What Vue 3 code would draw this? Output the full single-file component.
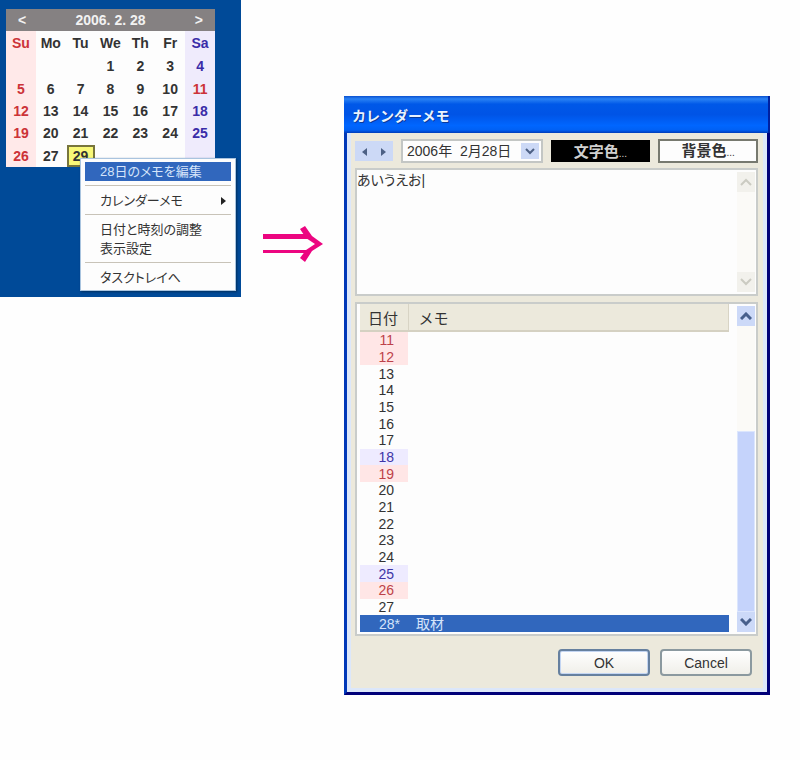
<template>
  <main class="scene">
    <section class="desktop">
      <div class="calendar">
        <div class="cal-head">
          <button type="button" aria-label="Previous month">&lt;</button>
          <span>2006. 2. 28</span>
          <button type="button" aria-label="Next month">&gt;</button>
        </div>
        <table class="cal-grid">
          <thead>
            <tr>
              <th v-for="(d, i) in weekdays" :key="d" :class="colClass(i)">{{ d }}</th>
            </tr>
          </thead>
          <tbody>
            <tr v-for="(week, w) in weeks" :key="w">
              <td v-for="(day, i) in week" :key="i" :class="[colClass(i), { holiday: day === 11 }]">
                <span :class="{ today: day === 29 }">{{ day }}</span>
              </td>
            </tr>
          </tbody>
        </table>
      </div>

      <div class="menu">
        <button type="button" class="active">28日のメモを編集</button>
        <hr />
        <button type="button" class="sub">
          カレンダーメモ
          <svg width="5" height="8" viewBox="0 0 5 8"><path d="M0 0L5 4L0 8Z" fill="#222" /></svg>
        </button>
        <hr />
        <button type="button">日付と時刻の調整</button>
        <button type="button">表示設定</button>
        <hr />
        <button type="button">タスクトレイへ</button>
      </div>
    </section>

    <div class="arrow">
      <svg width="62" height="38" viewBox="0 0 62 38">
        <path d="M1 9H47L52 14H1Z" fill="#ec0580" />
        <path d="M1 25H50L47 28H1Z" fill="#ec0580" />
        <path d="M38 4L43 1L50 11L61 19L50 26L43 37L38 33L44 25L53 19L44 13Z" fill="#ec0580" />
      </svg>
    </div>

    <form class="dialog" @submit.prevent>
      <h1>カレンダーメモ</h1>
      <div class="body">
        <div class="toolbar">
          <div class="nav">
            <button type="button" aria-label="Previous day">
              <svg width="5" height="8" viewBox="0 0 5 8"><path d="M5 0L0 4L5 8Z" fill="#4d6185" /></svg>
            </button>
            <button type="button" aria-label="Next day">
              <svg width="5" height="8" viewBox="0 0 5 8"><path d="M0 0L5 4L0 8Z" fill="#4d6185" /></svg>
            </button>
          </div>
          <div class="date">
            <select aria-label="日付">
              <option>2006年&nbsp; 2月28日</option>
            </select>
            <span class="drop">
              <svg width="10" height="7" viewBox="0 0 10 7"><path d="M1 1L5 5L9 1" fill="none" stroke="#4d6185" stroke-width="2" /></svg>
            </span>
          </div>
          <button type="button" class="color dark">文字色<small>...</small></button>
          <button type="button" class="color">背景色<small>...</small></button>
        </div>

        <div class="frame memo">
          <textarea v-model="memo" aria-label="メモ" spellcheck="false"></textarea>
          <div class="scroll off">
            <button type="button" aria-label="Scroll up"><svg width="12" height="8" viewBox="0 0 12 8"><path d="M1 7L6 2L11 7" /></svg></button>
            <button type="button" aria-label="Scroll down"><svg width="12" height="8" viewBox="0 0 12 8"><path d="M1 1L6 6L11 1" /></svg></button>
          </div>
        </div>

        <div class="frame list">
          <table>
            <thead>
              <tr><th class="day">日付</th><th>メモ</th></tr>
            </thead>
            <tbody>
              <tr v-for="n in days" :key="n" :class="{ selected: n === 28 }">
                <td class="day" :class="dayClass(n)">{{ n }}{{ n === 28 ? '*' : '' }}</td>
                <td>{{ n === 28 ? '取材' : '' }}</td>
              </tr>
            </tbody>
          </table>
          <div class="scroll">
            <button type="button" aria-label="Scroll up"><svg width="12" height="8" viewBox="0 0 12 8"><path d="M1 7L6 2L11 7" /></svg></button>
            <div class="thumb"></div>
            <button type="button" aria-label="Scroll down"><svg width="12" height="8" viewBox="0 0 12 8"><path d="M1 1L6 6L11 1" /></svg></button>
          </div>
        </div>

        <div class="actions">
          <button type="submit" class="ok">OK</button>
          <button type="button">Cancel</button>
        </div>
      </div>
    </form>
  </main>
</template>

<script setup>
import { ref } from "vue"

const memo = ref("あいうえお|")
const weekdays = ["Su", "Mo", "Tu", "We", "Th", "Fr", "Sa"]
const weeks = [
  ["", "", "", 1, 2, 3, 4],
  [5, 6, 7, 8, 9, 10, 11],
  [12, 13, 14, 15, 16, 17, 18],
  [19, 20, 21, 22, 23, 24, 25],
  [26, 27, 29, "", "", "", ""]
]
const days = Array.from({ length: 18 }, (_, i) => i + 11)

function colClass(i) {
  if (i === 0) return "sun"
  if (i === 6) return "sat"
  return ""
}

function dayClass(n) {
  if ([11, 12, 19, 26].includes(n)) return "red"
  if ([18, 25].includes(n)) return "blue"
  return ""
}
</script>

<style>
body {
  margin: 0;
  background: #fefefe;
}
</style>

<style scoped>
.scene {
  display: grid;
  grid-template-columns: 241fr 103fr 426fr 30fr;
  align-items: start;
  font-family: "Liberation Sans", "Noto Sans CJK JP", sans-serif;
  font-size: 14px;
  color: #333;
}

* {
  box-sizing: border-box;
}

button, select, textarea {
  font: inherit;
  color: inherit;
  margin: 0;
  padding: 0;
  border: 0;
  background: none;
}

.desktop {
  position: relative;
  padding: 9px 26px 0 6px;
  height: 297px;
  background: #004a98;
}

.calendar {
  background: #fdfdfd;
  font-weight: bold;
}

.cal-head {
  display: flex;
  justify-content: space-between;
  align-items: center;
  height: 22px;
  padding: 0 12px;
  background: #858182;
  color: #f2f2f2;
}

.cal-grid {
  width: 100%;
  height: 136px;
  table-layout: fixed;
  border-collapse: collapse;
  text-align: center;
}

.cal-grid th, .cal-grid td {
  padding: 0;
  line-height: 22px;
}

.cal-grid th {
  height: 24px;
}

.cal-grid span {
  display: block;
  margin: 0 1px;
  min-height: 22px;
}

.cal-grid .sun {
  background: #ffe9e9;
  color: #cc3338;
}

.cal-grid .sat {
  background: #efebfc;
  color: #3a2ca8;
}

.cal-grid .holiday {
  color: #cc3338;
}

.cal-grid .today {
  box-shadow: inset 0 0 0 2px #77753c;
  background: #f8f878;
}

.menu {
  position: absolute;
  left: 80px;
  top: 158px;
  width: 156px;
  padding: 3px 4px;
  border: 1px solid #a9c4df;
  background: #fdfdfd;
  box-shadow: 1px 1px 2px #00305f;
  font-size: 13px;
  font-feature-settings: "palt";
}

.menu button {
  display: flex;
  align-items: center;
  justify-content: space-between;
  width: 100%;
  height: 19px;
  padding: 0 5px 0 15px;
  line-height: 19px;
  white-space: nowrap;
}

.menu .active {
  background: #3167bd;
  color: #d5e4fa;
}

.menu hr {
  height: 1px;
  margin: 4px 0 5px;
  border: 0;
  background: #c8c3b8;
}

.arrow {
  display: flex;
  justify-content: center;
  padding: 225px 0 0;
}

.dialog {
  margin-top: 96px;
  border: solid #0038b8;
  border-width: 0 3px 3px;
  border-right-color: #000078;
  border-bottom-color: #000078;
  background: #ece9dc;
}

h1 {
  margin: 0 -3px;
  padding: 2px 8px 0;
  height: 37px;
  line-height: 37px;
  font-size: 14px;
  color: #e8f2ff;
  text-shadow: 1px 1px #0a3a9a;
  border-right: 2px solid #0020a0;
  background: linear-gradient(#0a50d0, #2a82f4 8%, #0058e8 22%, #0054e6 50%, #0066ff 80%, #0060f4 92%, #003cb8);
}

.body {
  padding: 6px 5px 12px 4px;
  border: 4px solid #dce7fa;
  border-top: 0;
}

.toolbar {
  display: flex;
  align-items: center;
  gap: 8px;
  height: 24px;
}

.nav {
  display: flex;
  width: 38px;
  height: 20px;
  background: #ccd9f6;
}

.nav button {
  flex: 1;
}

.date {
  position: relative;
  flex: 142;
  height: 24px;
}

.date select {
  appearance: none;
  width: 100%;
  height: 100%;
  padding: 0 24px 0 4px;
  border: 2px solid #c3c6c4;
  border-radius: 0;
  background: #fdfdfd;
}

.drop {
  position: absolute;
  right: 4px;
  top: 4px;
  display: flex;
  align-items: center;
  justify-content: center;
  width: 18px;
  height: 16px;
  background: #ccd9f6;
  pointer-events: none;
}

.color {
  flex: 96;
  height: 24px;
  border: 2px solid #77796f;
  background: #fdfdfd;
  font-size: 15px;
  font-weight: bold;
  line-height: 20px;
}

.color small {
  font-size: 10px;
  font-weight: normal;
}

.dark {
  height: 22px;
  border-color: #000;
  background: #000;
  color: #d0d0d0;
}

.frame {
  display: flex;
  border: 2px solid #c9ccca;
  background: #fdfdfd;
}

.memo {
  height: 128px;
  margin-top: 5px;
}

textarea {
  flex: 1;
  min-width: 0;
  resize: none;
  outline: 0;
  overflow: hidden;
  line-height: 20px;
  font-feature-settings: "palt";
}

.scroll {
  display: flex;
  flex-direction: column;
  justify-content: space-between;
  width: 18px;
  margin: 2px 1px;
  background: #fbfaf7;
}

.scroll button {
  display: flex;
  align-items: center;
  justify-content: center;
  height: 20px;
  background: #ccd9f8;
}

.scroll path {
  fill: none;
  stroke: #48608c;
  stroke-width: 3;
}

.off button {
  background: #f2f1ec;
}

.off path {
  stroke: #cbcbc2;
  stroke-width: 2;
}

.thumb {
  flex: 0 0 181px;
  margin-top: auto;
  border: 1px solid #dce6fd;
  background: #c5d3fb;
}

.list {
  height: 334px;
  margin-top: 6px;
}

.list table {
  flex: 1;
  height: 328px;
  margin: 0 7px 0 3px;
  border-collapse: collapse;
  text-align: left;
}

.list th {
  height: 27px;
  padding: 0 0 0 10px;
  border-bottom: 2px solid #d5d1c2;
  border-right: 1px solid #d8d4c5;
  background: #ece9dc;
  font-size: 15px;
  font-weight: normal;
}

.list td {
  padding: 0 0 0 8px;
  line-height: 16px;
}

.list .day {
  width: 48px;
  padding: 0 0 0 8px;
}

.list td.day {
  padding: 0 14px 0 0;
  text-align: right;
}

.list .red {
  background: #ffe6e6;
  color: #bd4249;
}

.list .blue {
  background: #eeebff;
  color: #4036a8;
}

.list .selected {
  background: #3167bd;
  color: #d5e4fa;
}

.list .selected .day {
  padding-right: 8px;
}

.actions {
  display: flex;
  justify-content: flex-end;
  gap: 10px;
  margin-top: 13px;
  padding-right: 6px;
}

.actions button {
  width: 92px;
  height: 27px;
  border: 2px solid #8b999f;
  border-radius: 4px;
  background: linear-gradient(#fff, #f0efe9);
}

.actions .ok {
  border-color: #66809f;
  box-shadow: inset 0 0 0 1px #c3d5f2;
}
</style>
